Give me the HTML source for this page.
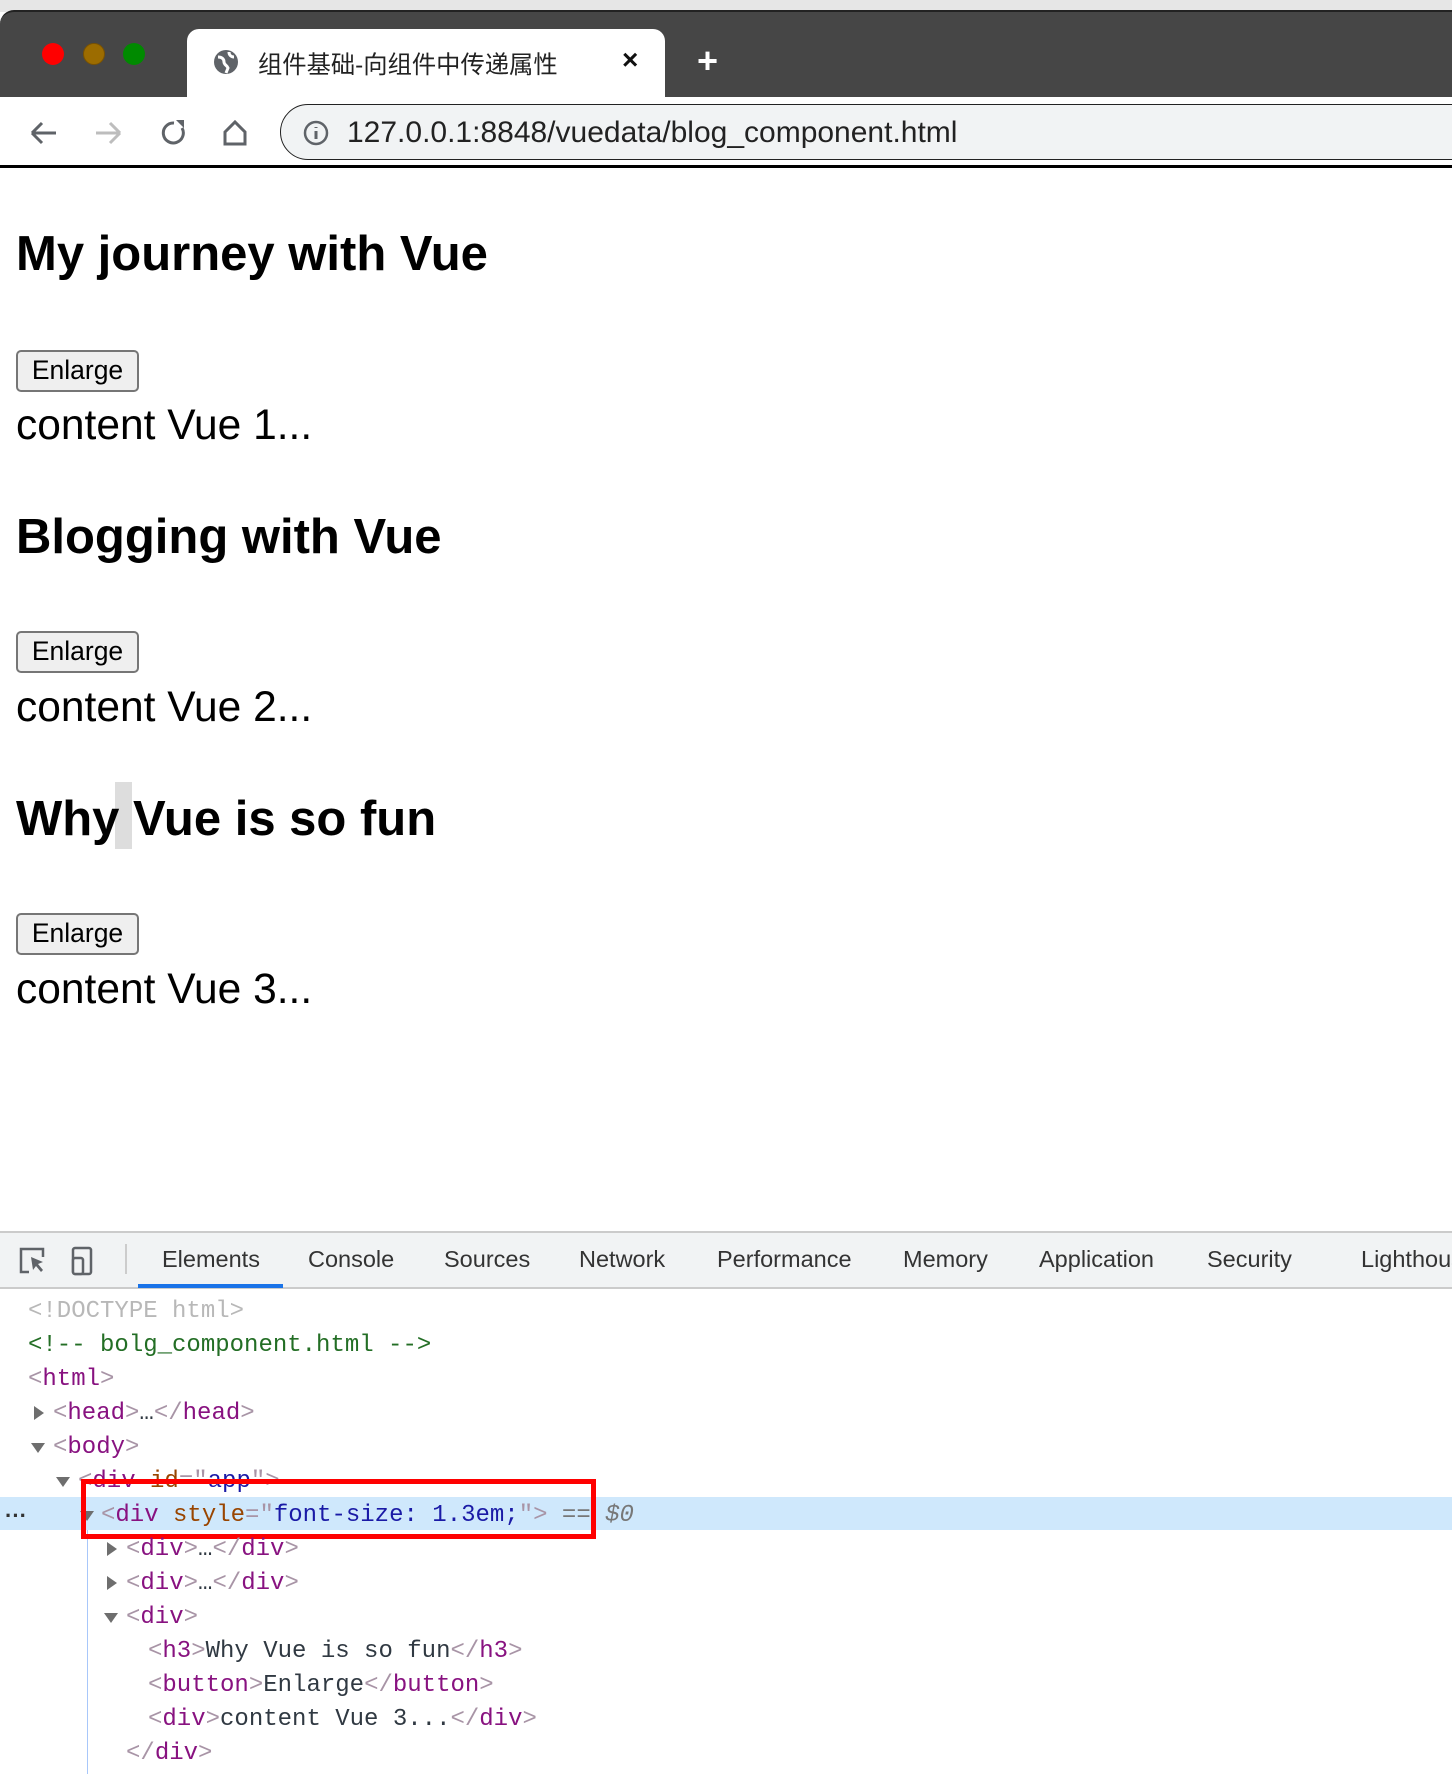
<!DOCTYPE html>
<html><head><meta charset="utf-8">
<style>
*{margin:0;padding:0;box-sizing:border-box}
body{width:1452px;height:1774px;position:relative;overflow:hidden;background:#fff;font-family:"Liberation Sans",Arial,sans-serif;color:#000}
.a{position:absolute;white-space:nowrap}
.h{font-weight:bold;font-size:49px;left:16px}
.c{font-size:42.5px;left:16px}
.btn{position:absolute;left:16px;width:123px;height:42px;border:2px solid #767676;border-radius:5px;background:#efefef;font-size:26.5px;text-align:center;line-height:37px}
.tab{font-size:23.5px;color:#333;top:1246px}
.m{font-family:"Liberation Mono",monospace;font-size:24px;line-height:34px;position:absolute;white-space:nowrap}
.b{color:#a894a6}.t{color:#881280}.an{color:#994500}.av{color:#1a1aa6}.tx{color:#303942}
.tri{position:absolute;width:0;height:0}
.tr{border-top:7px solid transparent;border-bottom:7px solid transparent;border-left:10px solid #6e6e6e}
.td{border-left:7px solid transparent;border-right:7px solid transparent;border-top:10px solid #6e6e6e}
</style></head><body>
<div class="a" style="left:0;top:0;width:1452px;height:12px;background:#e6e6e6"></div>
<div class="a" style="left:0;top:10px;width:1452px;height:87px;background:#464646;border-radius:14px 0 0 0;border-top:2px solid #222"></div>
<div class="a" style="left:42px;top:43px;width:22px;height:22px;border-radius:50%;background:#f00"></div>
<div class="a" style="left:83px;top:43px;width:22px;height:22px;border-radius:50%;background:#9c6c00;border:1px solid #7a5200"></div>
<div class="a" style="left:123px;top:43px;width:22px;height:22px;border-radius:50%;background:#008a00"></div>
<div class="a" style="left:187px;top:29px;width:478px;height:70px;background:#fff;border-radius:12px 12px 0 0"></div>
<svg class="a" style="left:212px;top:48px" width="28" height="28" viewBox="0 0 28 28"><circle cx="14" cy="14" r="12" fill="#5f6368"/><path d="M6 9c4 0 6 2 6 5s3 3 4 6l-2 5M17 4c0 3 2 5 5 5" stroke="#fff" stroke-width="3" fill="none"/></svg>
<div class="a" style="left:258px;top:45px;font-size:24.3px;font-family:'Liberation Sans','Noto Sans CJK SC',sans-serif;color:#222">组件基础-向组件中传递属性</div>
<div class="a" style="left:622px;top:44px;font-size:28px;color:#111;font-weight:bold">×</div>
<div class="a" style="left:697px;top:40px;font-size:36px;color:#fff;font-weight:bold">+</div>
<div class="a" style="left:0;top:97px;width:1452px;height:71px;background:#fff;border-bottom:3px solid #000"></div>
<svg class="a" style="left:28px;top:118px" width="240" height="30" viewBox="0 0 240 30">
<path d="M4 15h24M4 15l10-10M4 15l10 10" stroke="#5f6368" stroke-width="3" fill="none"/>
<path d="M68 15h24M92 15l-10-10M92 15l-10 10" stroke="#bdbdbd" stroke-width="3" fill="none"/>
<path d="M146 5a10 10 0 1 0 8 5" stroke="#5f6368" stroke-width="3" fill="none"/><path d="M148 2h8v8z" fill="#5f6368"/>
<path d="M197 14l10-10 10 10v12h-20z" stroke="#5f6368" stroke-width="3" fill="none"/>
</svg>
<div class="a" style="left:280px;top:104px;width:1200px;height:56px;border:1.5px solid #222;border-radius:28px;background:#f1f3f4"></div>
<svg class="a" style="left:302px;top:119px" width="28" height="28" viewBox="0 0 28 28"><circle cx="14" cy="14" r="11" stroke="#5f6368" stroke-width="2.5" fill="none"/><path d="M14 12v8M14 8v1" stroke="#5f6368" stroke-width="3"/></svg>
<div class="a" style="left:347px;top:116px;font-size:30px;color:#222">127.0.0.1:8848/vuedata/blog_component.html</div>

<div class="a h" style="top:226px">My journey with Vue</div>
<div class="btn" style="top:350px">Enlarge</div>
<div class="a c" style="top:402px">content Vue 1...</div>
<div class="a h" style="top:509px">Blogging with Vue</div>
<div class="btn" style="top:631px">Enlarge</div>
<div class="a c" style="top:684px">content Vue 2...</div>
<div class="a" style="left:115px;top:782px;width:17px;height:67px;background:#ddd"></div>
<div class="a h" style="top:791px">Why Vue is so fun</div>
<div class="btn" style="top:913px">Enlarge</div>
<div class="a c" style="top:966px">content Vue 3...</div>

<div class="a" style="left:0;top:1231px;width:1452px;height:58px;background:#f1f3f4;border-top:2px solid #cbcbcb;border-bottom:2px solid #cbcbcb"></div>
<svg class="a" style="left:18px;top:1246px" width="90" height="30" viewBox="0 0 90 30">
<path d="M11 26H3V3h22v8" stroke="#5f6368" stroke-width="2.5" fill="none"/><path d="M13 11l12 5-5 2 5 6-2 2-5-6-3 4z" fill="#5f6368"/>
<rect x="55" y="2" width="18" height="26" rx="2" stroke="#5f6368" stroke-width="2.5" fill="none"/><rect x="55" y="12" width="10" height="16" rx="2" stroke="#5f6368" stroke-width="2.5" fill="#f1f3f4"/>
</svg>
<div class="a" style="left:125px;top:1244px;width:2px;height:30px;background:#ccc"></div>
<div class="a tab" style="left:162px">Elements</div>
<div class="a tab" style="left:308px">Console</div>
<div class="a tab" style="left:444px">Sources</div>
<div class="a tab" style="left:579px">Network</div>
<div class="a tab" style="left:717px">Performance</div>
<div class="a tab" style="left:903px">Memory</div>
<div class="a tab" style="left:1039px">Application</div>
<div class="a tab" style="left:1207px">Security</div>
<div class="a tab" style="left:1361px">Lighthouse</div>
<div class="a" style="left:138px;top:1284px;width:145px;height:4px;background:#1a73e8"></div>

<div class="a" style="left:0;top:1497px;width:1452px;height:33px;background:#cfe8fc"></div>
<div class="a" style="left:87px;top:1530px;width:1px;height:244px;background:#a8c7fa"></div>
<div class="a" style="left:5px;top:1503px;font-size:22px;color:#333;font-weight:bold">···</div>

<div class="m" style="left:28px;top:1295px;color:#b8b8b8">&lt;!DOCTYPE html&gt;</div>
<div class="m" style="left:28px;top:1329px;color:#236e25">&lt;!-- bolg_component.html --&gt;</div>
<div class="m" style="left:28px;top:1363px"><span class="b">&lt;</span><span class="t">html</span><span class="b">&gt;</span></div>
<div class="tri tr" style="left:34px;top:1406px"></div>
<div class="m" style="left:53px;top:1397px"><span class="b">&lt;</span><span class="t">head</span><span class="b">&gt;</span><span class="tx">…</span><span class="b">&lt;/</span><span class="t">head</span><span class="b">&gt;</span></div>
<div class="tri td" style="left:31px;top:1443px"></div>
<div class="m" style="left:53px;top:1431px"><span class="b">&lt;</span><span class="t">body</span><span class="b">&gt;</span></div>
<div class="tri td" style="left:56px;top:1477px"></div>
<div class="m" style="left:78px;top:1465px"><span class="b">&lt;</span><span class="t">div</span> <span class="an">id</span><span class="b">="</span><span class="av">app</span><span class="b">"&gt;</span></div>
<div class="tri td" style="left:80px;top:1511px"></div>
<div class="m" style="left:101px;top:1499px"><span class="b">&lt;</span><span class="t">div</span> <span class="an">style</span><span class="b">="</span><span class="av">font-size: 1.3em;</span><span class="b">"&gt;</span> <span style="color:#777">==</span> <span style="color:#777;font-style:italic">$0</span></div>
<div class="a" style="left:81px;top:1479px;width:515px;height:60px;border:5px solid #f00"></div>
<div class="tri tr" style="left:107px;top:1542px"></div>
<div class="m" style="left:126px;top:1533px"><span class="b">&lt;</span><span class="t">div</span><span class="b">&gt;</span><span class="tx">…</span><span class="b">&lt;/</span><span class="t">div</span><span class="b">&gt;</span></div>
<div class="tri tr" style="left:107px;top:1576px"></div>
<div class="m" style="left:126px;top:1567px"><span class="b">&lt;</span><span class="t">div</span><span class="b">&gt;</span><span class="tx">…</span><span class="b">&lt;/</span><span class="t">div</span><span class="b">&gt;</span></div>
<div class="tri td" style="left:104px;top:1613px"></div>
<div class="m" style="left:126px;top:1601px"><span class="b">&lt;</span><span class="t">div</span><span class="b">&gt;</span></div>
<div class="m" style="left:148px;top:1635px"><span class="b">&lt;</span><span class="t">h3</span><span class="b">&gt;</span><span class="tx">Why Vue is so fun</span><span class="b">&lt;/</span><span class="t">h3</span><span class="b">&gt;</span></div>
<div class="m" style="left:148px;top:1669px"><span class="b">&lt;</span><span class="t">button</span><span class="b">&gt;</span><span class="tx">Enlarge</span><span class="b">&lt;/</span><span class="t">button</span><span class="b">&gt;</span></div>
<div class="m" style="left:148px;top:1703px"><span class="b">&lt;</span><span class="t">div</span><span class="b">&gt;</span><span class="tx">content Vue 3...</span><span class="b">&lt;/</span><span class="t">div</span><span class="b">&gt;</span></div>
<div class="m" style="left:126px;top:1737px"><span class="b">&lt;/</span><span class="t">div</span><span class="b">&gt;</span></div>
</body></html>
